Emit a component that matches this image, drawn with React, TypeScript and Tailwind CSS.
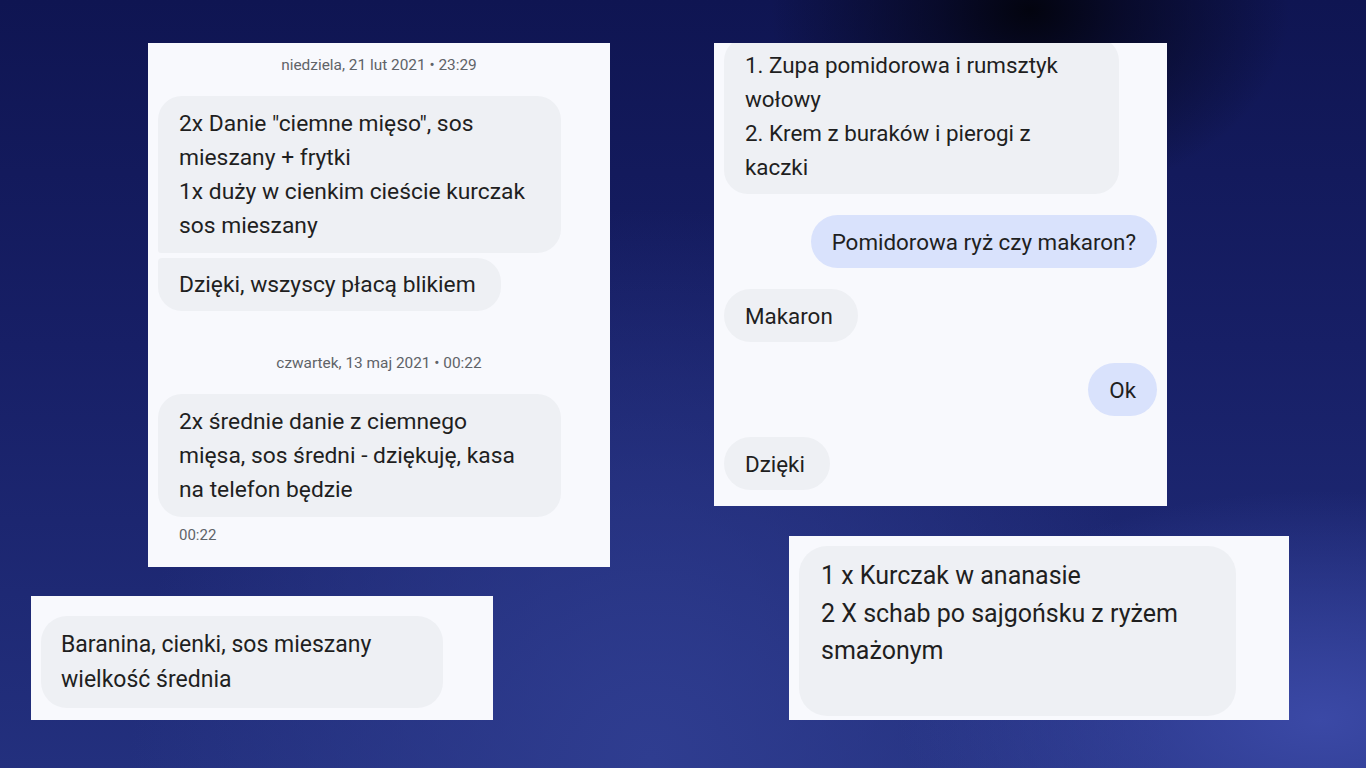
import React from 'react';

const font = { fontFamily: 'Roboto, "Noto Sans", sans-serif' };

function Stamp({ children }: { children: React.ReactNode }) {
  return <div className="text-center text-[15.4px] leading-5 text-[#5f6368]">{children}</div>;
}

export default function App() {
  return (
    <div
      className="relative w-[1366px] h-[768px] overflow-hidden bg-[#18206a] bg-[radial-gradient(ellipse_at_1030px_10px,#03040f_0%,rgba(5,6,25,0.7)_90px,transparent_260px),radial-gradient(ellipse_at_1320px_720px,#3b49a6_0%,transparent_420px),radial-gradient(ellipse_at_650px_760px,#2f3d90_0%,transparent_520px),linear-gradient(180deg,#0f1552_0%,#171f66_45%,#23307e_100%)]"
      style={font}
    >
      {/* card A */}
      <div className="absolute left-[148px] top-[43px] w-[462px] h-[524px] bg-[#f8f9fd] px-[10px] pt-3 flex flex-col">
        <Stamp>niedziela, 21 lut 2021 • 23:29</Stamp>
        <div className="mt-[21px] w-[403px] bg-[#eef0f4] rounded-[24px] rounded-bl-[3px] pl-[21px] pr-3 pt-[11px] pb-[10px] text-[22.8px] leading-[34px] text-[#1f1f1f]">
          2x Danie "ciemne mięso", sos<br />mieszany + frytki<br />1x duży w cienkim cieście kurczak<br />sos mieszany
        </div>
        <div className="mt-[5px] self-start bg-[#eef0f4] rounded-[24px] rounded-tl-[4px] pl-[21px] pr-[25px] py-[9.5px] text-[22.8px] leading-[34px] text-[#1f1f1f]">
          Dzięki, wszyscy płacą blikiem
        </div>
        <div className="mt-[42px]">
          <Stamp>czwartek, 13 maj 2021 • 00:22</Stamp>
        </div>
        <div className="mt-[21px] w-[403px] bg-[#eef0f4] rounded-[24px] pl-[21px] pr-3 pt-[11px] pb-[10px] text-[22.8px] leading-[34px] text-[#1f1f1f]">
          2x średnie danie z ciemnego<br />mięsa, sos średni - dziękuję, kasa<br />na telefon będzie
        </div>
        <div className="mt-[8px] pl-[21px] text-[15px] leading-5 text-[#5f6368]">00:22</div>
      </div>

      {/* card B */}
      <div className="absolute left-[714px] top-[43px] w-[453px] h-[463px] bg-[#f8f9fd] px-[10px] overflow-hidden flex flex-col">
        <div className="-mt-[6px] w-[395px] bg-[#eef0f4] rounded-[24px] pl-[21px] pr-3 pt-[11px] pb-[10px] text-[22.4px] leading-[34px] text-[#1f1f1f]">
          1. Zupa pomidorowa i rumsztyk<br />wołowy<br />2. Krem z buraków i pierogi z<br />kaczki
        </div>
        <div className="mt-[21px] self-end bg-[#d9e2fc] rounded-[27px] px-[21px] py-[9.5px] text-[22.4px] leading-[34px] text-[#1f1f1f]">
          Pomidorowa ryż czy makaron?
        </div>
        <div className="mt-[21px] self-start bg-[#eef0f4] rounded-[27px] pl-[21px] pr-[25px] py-[9.5px] text-[22.4px] leading-[34px] text-[#1f1f1f]">
          Makaron
        </div>
        <div className="mt-[21px] self-end bg-[#d9e2fc] rounded-[27px] px-[21px] py-[9.5px] text-[22.4px] leading-[34px] text-[#1f1f1f]">
          Ok
        </div>
        <div className="mt-[21px] self-start bg-[#eef0f4] rounded-[27px] pl-[21px] pr-[25px] py-[9.5px] text-[22.4px] leading-[34px] text-[#1f1f1f]">
          Dzięki
        </div>
      </div>

      {/* card C */}
      <div className="absolute left-[31px] top-[596px] w-[462px] h-[124px] bg-[#f8f9fd] px-[10px] pt-5">
        <div className="w-[402px] bg-[#eef0f4] rounded-[26px] pl-[20px] pr-3 pt-[11px] pb-[11px] text-[23px] leading-[35px] text-[#1f1f1f]">
          Baranina, cienki, sos mieszany<br />wielkość średnia
        </div>
      </div>

      {/* card D */}
      <div className="absolute left-[789px] top-[536px] w-[500px] h-[184px] bg-[#f8f9fd] px-[10px] pt-[10px]">
        <div className="w-[437px] h-[170px] bg-[#eef0f4] rounded-[28px] pl-[22px] pr-3 pt-[11px] text-[25px] leading-[37.5px] text-[#1f1f1f]">
          1 x Kurczak w ananasie<br />2 X schab po sajgońsku z ryżem<br />smażonym
        </div>
      </div>
    </div>
  );
}
